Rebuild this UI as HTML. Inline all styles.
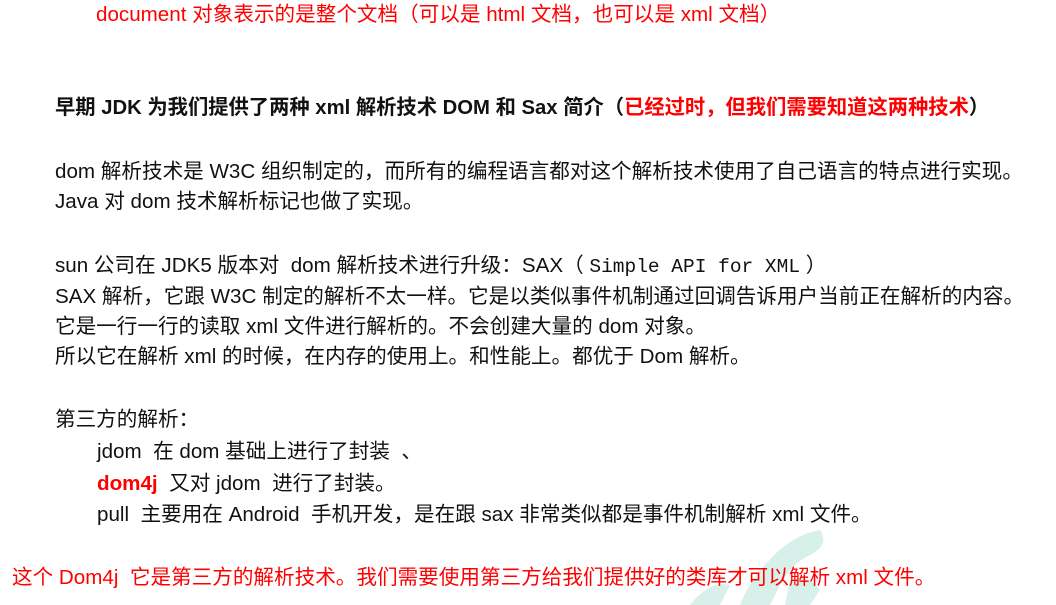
<!DOCTYPE html>
<html><head><meta charset="utf-8"><style>
body{margin:0;width:1056px;height:605px;background:#fff;overflow:hidden;position:relative;font-family:"Liberation Sans","Noto Sans CJK SC",sans-serif;color:#111;}
.l{position:absolute;white-space:nowrap;font-size:20.6px;line-height:24px;}
.r{color:#f00}
.b{font-weight:bold}
.m{font-family:"Liberation Mono","Noto Sans CJK SC",monospace;font-size:19.5px}
</style></head><body>
<svg style="position:absolute;left:670px;top:525px" width="170" height="80"><path d="M95 40 Q120 10 150 5 Q160 20 140 30 Q120 40 110 60 L100 80 L70 80 Q80 55 95 40Z M20 80 Q40 55 60 60 L50 80Z M120 55 Q140 50 150 65 L140 80 L115 80Z" fill="#d8f0ea"/></svg>
<div class="l r" style="left:96px;top:3px">document 对象表示的是整个文档（可以是 html 文档，也可以是 xml 文档）</div>
<div class="l b" style="left:55px;top:96px;font-size:20.3px">早期 JDK 为我们提供了两种 xml 解析技术 DOM 和 Sax 简介（<span class="r">已经过时，但我们需要知道这两种技术</span>）</div>
<div class="l" style="left:55px;top:160px">dom 解析技术是 W3C 组织制定的，而所有的编程语言都对这个解析技术使用了自己语言的特点进行实现。</div>
<div class="l" style="left:55px;top:190px">Java 对 dom 技术解析标记也做了实现。</div>
<div class="l" style="left:55px;top:254px">sun 公司在 JDK5 版本对 &nbsp;dom 解析技术进行升级：SAX（ <span class="m">Simple API for XML</span> ）</div>
<div class="l" style="left:55px;top:285px">SAX 解析，它跟 W3C 制定的解析不太一样。它是以类似事件机制通过回调告诉用户当前正在解析的内容。</div>
<div class="l" style="left:55px;top:315px">它是一行一行的读取 xml 文件进行解析的。不会创建大量的 dom 对象。</div>
<div class="l" style="left:55px;top:345px">所以它在解析 xml 的时候，在内存的使用上。和性能上。都优于 Dom 解析。</div>
<div class="l" style="left:55px;top:408px">第三方的解析：</div>
<div class="l" style="left:97px;top:440px">jdom &nbsp;在 dom 基础上进行了封装 &nbsp;、</div>
<div class="l" style="left:97px;top:472px"><span class="r b">dom4j</span> &nbsp;又对 jdom &nbsp;进行了封装。</div>
<div class="l" style="left:97px;top:503px">pull &nbsp;主要用在 Android &nbsp;手机开发，是在跟 sax 非常类似都是事件机制解析 xml 文件。</div>
<div class="l r" style="left:12px;top:566px">这个 Dom4j &nbsp;它是第三方的解析技术。我们需要使用第三方给我们提供好的类库才可以解析 xml 文件。</div>
</body></html>
